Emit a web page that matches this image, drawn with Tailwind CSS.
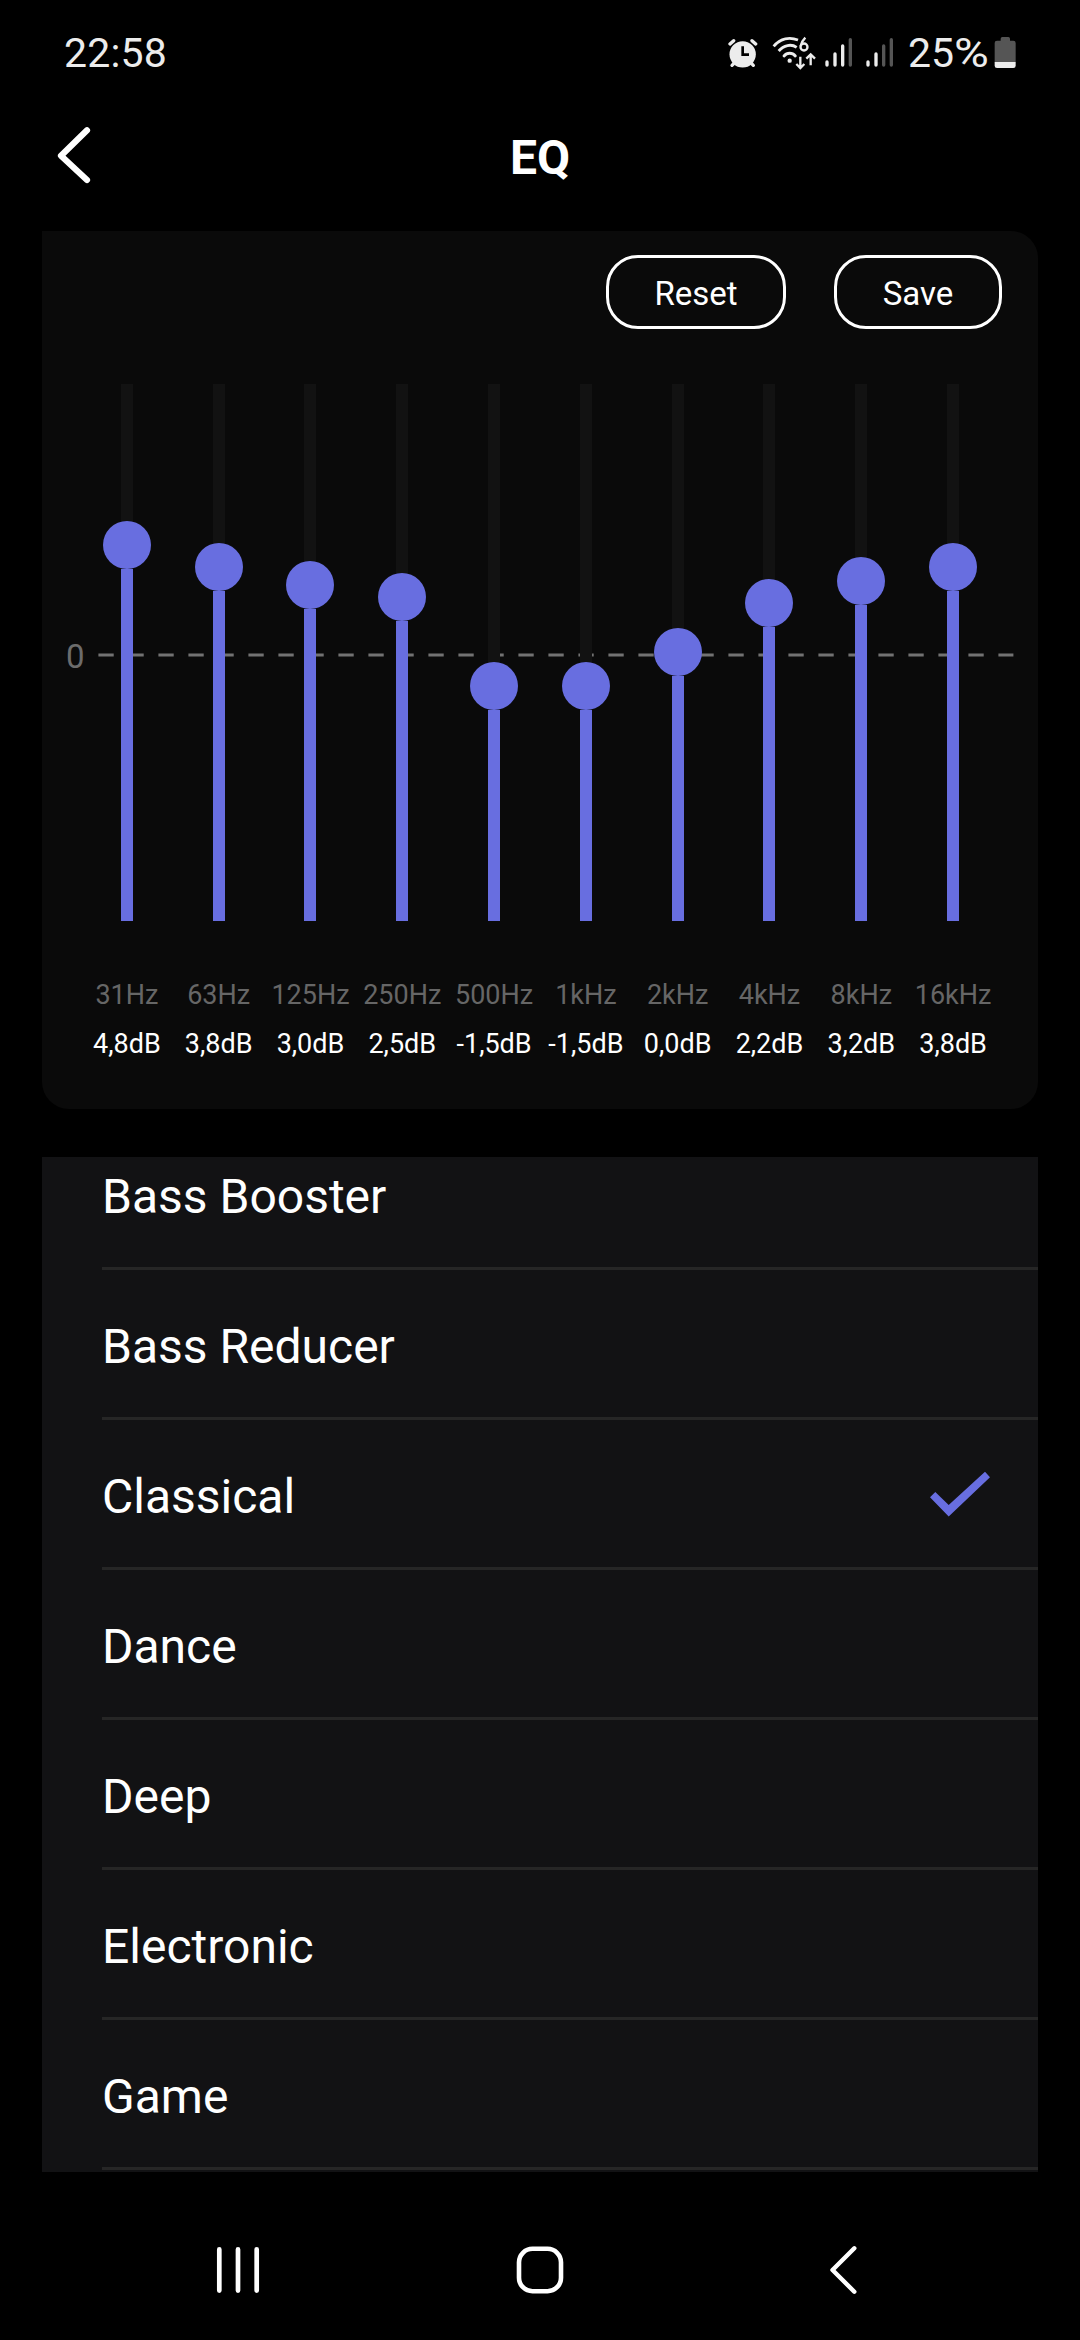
<!DOCTYPE html>
<html lang="en">
<head>
<meta charset="utf-8">
<title>EQ</title>
<script src="https://cdn.jsdelivr.net/npm/@tailwindcss/browser@4"></script>
</head>
<body class="bg-black">
<div class="flex h-[2340px] w-[1080px] flex-col overflow-hidden bg-black font-[Roboto,sans-serif] text-white">

  <!-- Status bar -->
  <div class="flex h-[106px] shrink-0 items-center justify-between pl-16 pr-[63px] text-[41px] leading-[48px] text-[#ececec]">
    <span class="tracking-[0.2px]">22:58</span>
    <div class="flex items-center">
      <svg class="h-[34px] w-[30px]" viewBox="80 48 90 102" fill="none" stroke="#ececec">
        <circle cx="124" cy="103" r="39.500" fill="#ececec" stroke="none"/>
        <path d="M86 72 L97 62 M163 72 L152 62" stroke-width="10" stroke-linecap="round"/>
        <path d="M92 136 L102 126 M156 136 L146 126" stroke-width="10" stroke-linecap="round"/>
        <path d="M124 79 V104 H143" stroke="#000" stroke-width="8"/>
      </svg>
      <svg class="ml-[14px] h-[34px] w-[45px]" viewBox="212 48 135 102" fill="none" stroke="#ececec">
        <path d="M217 79 C238 54 266 51 290 60" stroke-width="8.500"/>
        <path d="M232 93 C247 75 270 71 286 82" stroke-width="8.500"/>
        <path d="M248 108 C257 97 273 97 282 108" stroke-width="8.500" stroke-linecap="round"/>
        <circle cx="265" cy="122" r="6.500" fill="#ececec" stroke="none"/>
        <circle cx="308" cy="81" r="10.500" stroke-width="7"/>
        <path d="M298 78 C300 67 305 60 312 53" stroke-width="7"/>
        <path d="M297 110 V143 M285 132 L297 144 L309 132" stroke-width="7"/>
        <path d="M328 136 V105 M315 116 L328 103 L341 116" stroke-width="7"/>
      </svg>
      <svg class="ml-[8px] h-[34px] w-[30px]" viewBox="371 48 90 102" stroke-width="10" stroke-linecap="round">
        <path d="M377 126 V135 M401 102 V135 M424 78 V135" stroke="#ececec"/>
        <path d="M447 59 V135" stroke="#555"/>
      </svg>
      <svg class="ml-[11px] h-[34px] w-[30px]" viewBox="494 48 90 102" stroke-width="10" stroke-linecap="round">
        <path d="M500 126 V135 M524 102 V135" stroke="#ececec"/>
        <path d="M547 78 V135 M570 59 V135" stroke="#555"/>
      </svg>
      <span class="ml-[12px] flex w-[81px]">25<span class="origin-left scale-x-[1.16]">%</span></span>
      <svg class="ml-[5px] h-[34px] w-[23px]" viewBox="883 48 69 102">
        <path d="M903 56 Q903 51 908 51 H926 Q931 51 931 56 V62 H941 Q948 62 948 69 V127 H885 V69 Q885 62 892 62 H903 Z" fill="#555"/>
        <path d="M885 126 H948 V137 Q948 144 941 144 H892 Q885 144 885 137 Z" fill="#ececec"/>
      </svg>
    </div>
  </div>

  <!-- Title bar -->
  <header class="grid h-[125px] shrink-0 grid-cols-3 px-[54px] pt-[17px]">
    <svg class="h-[64px] w-[40px]" viewBox="54 123 40 64" fill="none" stroke="#fff" stroke-width="6.200" stroke-linecap="round" stroke-linejoin="round"><path d="M87 130.300 L61 155.700 L87 180"/></svg>
    <h1 class="pt-[7px] text-center text-[48px] font-bold leading-[56px]">EQ</h1>
  </header>

  <!-- Equalizer card -->
  <section class="relative mx-[42px] flex h-[878px] shrink-0 flex-col rounded-[27px] rounded-tl-none bg-[#0a0a0a]">
    <div class="flex justify-end gap-12 pr-9 pt-6 text-[33px]">
      <button class="h-[74px] w-[180px] rounded-[32px] border-3 border-white pt-[3px]">Reset</button>
      <button class="h-[74px] w-[168px] rounded-[32px] border-3 border-white pt-[3px]">Save</button>
    </div>
    <!-- zero level, runs behind the sliders -->
    <div class="absolute left-6 top-[405px] flex h-[39px] items-center text-[33px] leading-[39px] text-[#6c6c6c]">
      <span class="w-8 pt-0.5">0</span>
      <svg class="h-[5px] w-[916px]" viewBox="0 0 916 5"><path d="M0.400 1.900 H915.400" stroke="#727272" stroke-width="3" stroke-dasharray="15.300 14.700"/></svg>
    </div>
    <div id="bands" class="relative ml-[39px] mt-[55px] grid w-[918px] grid-cols-10"></div>
  </section>

  <!-- Preset list, scrolled -->
  <ul id="presets" class="mx-[42px] mt-12 flex h-[1015px] shrink-0 flex-col overflow-hidden bg-[#121214] text-[48px]"></ul>

  <!-- Navigation bar -->
  <nav class="flex h-[168px] shrink-0 items-center pl-[214px] pt-7">
    <svg class="h-[52px] w-[48px]" viewBox="214 2244 48 52" stroke="#fff" stroke-width="4.700" stroke-linecap="round"><path d="M219.300 2249.400 V2290.600 M238 2249.400 V2290.600 M256.700 2249.400 V2290.600"/></svg>
    <svg class="ml-[252px] h-[52px] w-[52px]" viewBox="514 2244 52 52" fill="none" stroke="#fff" stroke-width="4.600"><rect x="519" y="2248.800" width="42" height="42.400" rx="13.500"/></svg>
    <svg class="ml-[260px] h-[52px] w-[34px]" viewBox="826 2244 34 52" fill="none" stroke="#fff" stroke-width="4.400" stroke-linecap="round" stroke-linejoin="round"><path d="M854.300 2248.300 L832.500 2270 L854.300 2291.700"/></svg>
  </nav>
</div>

<script>
  // [frequency, gain, distance from track top to thumb top in px]
  const bands = [
    ['31Hz', '4,8dB', 137], ['63Hz', '3,8dB', 159], ['125Hz', '3,0dB', 177],
    ['250Hz', '2,5dB', 189], ['500Hz', '-1,5dB', 278], ['1kHz', '-1,5dB', 278],
    ['2kHz', '0,0dB', 244], ['4kHz', '2,2dB', 195], ['8kHz', '3,2dB', 173], ['16kHz', '3,8dB', 159]
  ];
  document.getElementById('bands').innerHTML = bands.map(([hz, db, top]) => `
    <div class="flex flex-col items-center whitespace-nowrap text-[27px] leading-8">
      <div class="flex h-[537px] flex-col items-center">
        <div class="w-3 shrink-0 bg-[#121212]" style="height:${top}px"></div>
        <div class="size-12 shrink-0 rounded-full bg-[#686ee0]"></div>
        <div class="w-3 grow bg-[#686ee0]"></div>
      </div>
      <span class="mt-[58px] text-[#666]">${hz}</span>
      <span class="mt-[17px]">${db}</span>
    </div>`).join('');

  const names = ['Bass Booster', 'Bass Reducer', 'Classical', 'Dance', 'Deep', 'Electronic', 'Game'];
  const tick = '<svg class="h-[50px] w-[64px]" viewBox="928 1469 64 50"><path fill="#686ee0" d="M930 1497.300 L935.300 1492 L948.700 1505 L985 1471.700 L990 1477.300 L948.700 1516.500 Z"/></svg>';
  document.getElementById('presets').innerHTML = names.map((n, i) => `
    <li class="ml-[60px] flex h-[150px] shrink-0 items-center justify-between border-b-3 border-[#262626] pr-[46px] ${i ? '' : '-mt-[37px]'}">
      <span class="pt-1.5">${n}</span>${n === 'Classical' ? tick : ''}
    </li>`).join('');
</script>
</body>
</html>
